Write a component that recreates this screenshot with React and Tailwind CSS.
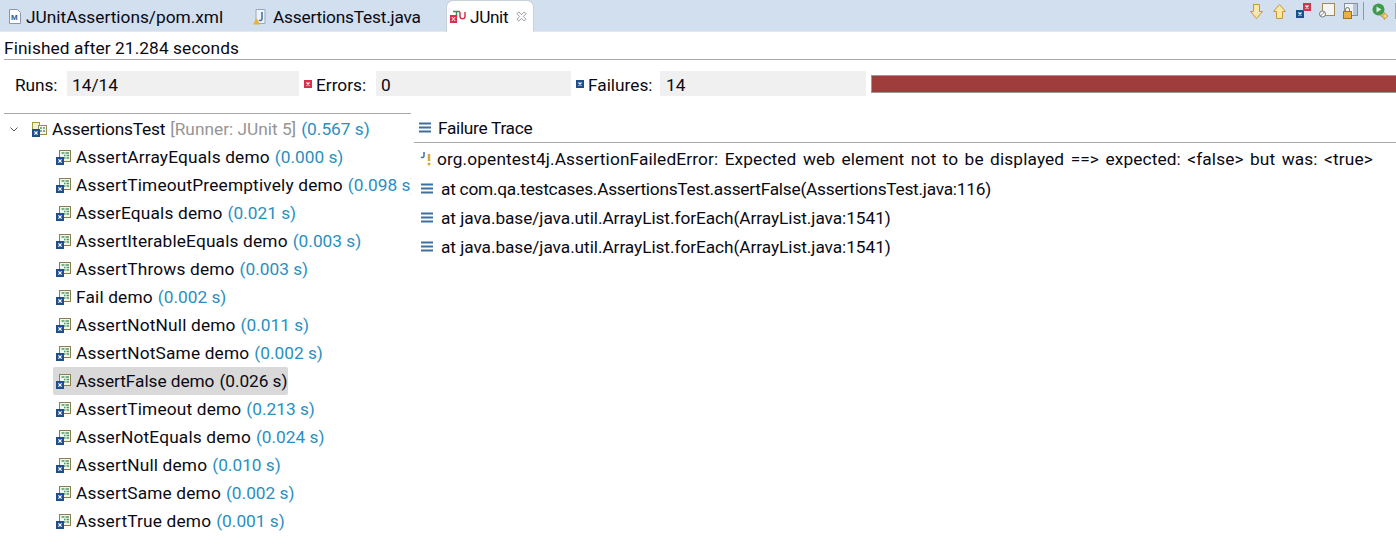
import React from "react";

const tests = [
  ["AssertArrayEquals demo", "(0.000 s)"],
  ["AssertTimeoutPreemptively demo", "(0.098 s)"],
  ["AsserEquals demo", "(0.021 s)"],
  ["AssertIterableEquals demo", "(0.003 s)"],
  ["AssertThrows demo", "(0.003 s)"],
  ["Fail demo", "(0.002 s)"],
  ["AssertNotNull demo", "(0.011 s)"],
  ["AssertNotSame demo", "(0.002 s)"],
  ["AssertFalse demo", "(0.026 s)", true],
  ["AssertTimeout demo", "(0.213 s)"],
  ["AsserNotEquals demo", "(0.024 s)"],
  ["AssertNull demo", "(0.010 s)"],
  ["AssertSame demo", "(0.002 s)"],
  ["AssertTrue demo", "(0.001 s)"],
];

const trace = [
  ["at com.qa.testcases.AssertionsTest.assertFalse(AssertionsTest.java:116)", "tracking-[-0.25px]"],
  ["at java.base/java.util.ArrayList.forEach(ArrayList.java:1541)", "tracking-[-0.07px]"],
  ["at java.base/java.util.ArrayList.forEach(ArrayList.java:1541)", "tracking-[-0.07px]"],
];

// small red or blue "x" square used by the counters and the tree
const XBox = ({ color = "#1f4e8c", size = 8 }) => (
  <svg width={size} height={size} viewBox="0 0 8 8" className="shrink-0 block">
    <rect width="8" height="8" fill={color} />
    <path d="M2.5 2.5l3 3M5.5 2.5l-3 3" stroke="#fff" strokeWidth="1.2" />
  </svg>
);

const TestIcon = () => (
  <svg width="15" height="15" viewBox="0 0 15 15" className="shrink-0">
    <rect x="3.500" y="0.500" width="11" height="11" fill="#f4f6ee" stroke="#8c7f4c" />
    <path d="M5.500 3h3M9.500 3h3.500M8 5.500h1.500M10.500 5.500h2.500M8 8h1.500M10.500 8h2.500" stroke="#4f9a6c" strokeWidth="1.300" />
    <rect x="0" y="7" width="8" height="8" fill="#1f4e8c" />
    <path d="M2.400 9.400l3.200 3.200M5.600 9.400l-3.200 3.200" stroke="#fff" strokeWidth="1.200" />
  </svg>
);

const SuiteIcon = () => (
  <svg width="15" height="15" viewBox="0 0 15 15" className="shrink-0">
    <rect x="0.500" y="0.500" width="7" height="7" fill="#eef2dc" stroke="#a39a3c" />
    <rect x="6.500" y="3.500" width="8" height="9" fill="#f4f6ee" stroke="#a0894c" />
    <path d="M8 6h2M11 6h2M8 9h2M11 9h2" stroke="#4f9a6c" strokeWidth="1.300" />
    <rect x="0" y="7" width="8" height="8" fill="#1f4e8c" />
    <path d="M2.400 9.400l3.200 3.200M5.600 9.400l-3.200 3.200" stroke="#fff" strokeWidth="1.200" />
  </svg>
);

const StackIcon = () => (
  <svg width="12" height="11" viewBox="0 0 12 11" className="shrink-0">
    <path d="M0 1.500h12M0 5.500h12M0 9.500h12" stroke="#3f6f9f" strokeWidth="2" />
  </svg>
);

const Toolbar = () => (
  <div className="flex items-start w-[146px] overflow-hidden">
    <svg width="13" height="15" viewBox="0 0 13 15" className="mt-[4px] mr-[10px] shrink-0">
      <path d="M3.500.5h6v7h3l-6 7-6-7h3z" fill="#fbe7a4" stroke="#c8963a" />
    </svg>
    <svg width="13" height="15" viewBox="0 0 13 15" className="mt-[4px] mr-[10px] shrink-0">
      <path d="M3.500 14.500h6v-7h3l-6-7-6 7h3z" fill="#fbe7a4" stroke="#c8963a" />
    </svg>
    <div className="relative w-[15px] h-[15px] mt-[3px] mr-[8px] shrink-0">
      <span className="absolute left-0 bottom-0"><XBox /></span>
      <span className="absolute right-0 top-0"><XBox color="#d9304f" /></span>
    </div>
    <svg width="16" height="15" viewBox="0 0 16 15" className="mt-[3px] mr-[8px] shrink-0">
      <rect x="3.500" y="0.500" width="12" height="12" fill="#f4f4f4" stroke="#a08a5a" />
      <circle cx="3.500" cy="11" r="3" fill="#fff" stroke="#777" />
      <path d="M1.500 13l4-4" stroke="#777" />
    </svg>
    <svg width="15" height="16" viewBox="0 0 15 16" className="mt-[3px] mr-[5px] shrink-0">
      <rect x="1.500" y="0.500" width="13" height="12" fill="#eef2f6" stroke="#8a9099" />
      <rect x="10" y="1" width="4" height="11" fill="#b6c8da" />
      <path d="M2.500 9V6.500a2 2 0 0 1 4 0V9" fill="none" stroke="#777" />
      <rect x="0.500" y="8.500" width="8" height="7" fill="#e8b23c" stroke="#a8701c" />
    </svg>
    <div className="w-px h-[18px] mt-[2px] bg-[#8f979f] mr-[8px] shrink-0" />
    <svg width="17" height="17" viewBox="0 0 17 17" className="mt-[3px] mr-[6px] shrink-0">
      <circle cx="6.500" cy="6.500" r="6" fill="#3f9b4b" />
      <path d="M4.500 3.500l5 3-5 3z" fill="#cfeedd" />
      <path d="M8 12h4v-2.500l4 3.500-4 3.500v-2.500h-2z" fill="#f5dc8c" stroke="#c8963a" />
    </svg>
    <div className="w-[2px] h-[16px] mt-[3px] bg-[#a4a9ad] shrink-0" />
  </div>
);

export default function App() {
  return (
    <div
      className="w-[1396px] h-[558px] bg-white text-[17.3px] leading-[24px] text-[#0a0a14] overflow-hidden flex flex-col"
      style={{ fontFamily: "Roboto, sans-serif" }}
    >
      {/* editor tabs */}
      <div className="h-[32px] shrink-0 bg-[#d1dfee] flex justify-between border-b border-[#e4e9ef]">
        <div className="flex items-end h-[32px]">
          <div className="flex items-center h-[31px] pl-[9px] w-[246px] gap-[5px]">
            <svg width="12" height="15" viewBox="0 0 12 15" className="shrink-0">
              <path d="M.5.500h8l3 3v11H.5z" fill="#fff" stroke="#8a97a8" />
              <text x="2" y="11" fontSize="8" fontWeight="700" fill="#2c5c9c" fontFamily="Liberation Sans">M</text>
            </svg>
            <span>JUnitAssertions/pom.xml</span>
          </div>
          <div className="flex items-center h-[31px] w-[200px] pl-[7px] gap-[5px]">
            <svg width="15" height="16" viewBox="0 0 15 16" className="shrink-0">
              <path d="M3 .500h9v14H3z" fill="#eef3fa" stroke="#9aa8bb" />
              <path d="M9 3v7c0 1.500-2 2-3 1" stroke="#3f6f9f" strokeWidth="1.500" fill="none" />
              <path d="M3.500 9l3.500 6.500H0z" fill="#e8b23c" />
            </svg>
            <span className="tracking-[-0.2px]">AssertionsTest.java</span>
          </div>
          <div className="flex items-center h-[32px] w-[88px] pl-[3px] gap-[2px] bg-white rounded-t-[7px] border border-b-0 border-[#c8d0d9]">
            <svg width="18" height="16" viewBox="0 0 18 16" className="shrink-0">
              <path d="M3 2.500h7M6.500 2.500V8" stroke="#3f8f5f" strokeWidth="1.500" />
              <rect x="0" y="6" width="7" height="8" fill="#d9304f" />
              <path d="M1.800 8l3.400 4M5.200 8l-3.400 4" stroke="#fff" />
              <path d="M10 3v4.500c0 3 5 3 5 0V3" stroke="#d9304f" strokeWidth="1.500" fill="none" />
            </svg>
            <span className="tracking-[-0.4px]">JUnit</span>
            <svg width="11" height="11" viewBox="0 0 12 12" className="ml-[6px] shrink-0">
              <path d="M1 3l2-2 3 3 3-3 2 2-3 3 3 3-2 2-3-3-3 3-2-2 3-3z" fill="#fff" stroke="#8d949b" />
            </svg>
          </div>
        </div>
        <Toolbar />
      </div>

      {/* status line */}
      <div className="h-[28px] shrink-0 ml-[4px] pt-[5px] flex items-center border-b border-[#a9a9a9] tracking-[0.1px]">
        Finished after 21.284 seconds
      </div>

      {/* counters */}
      <div className="h-[25px] mt-[11px] shrink-0 flex items-center">
        <span className="pl-[15px] w-[67px] pt-[2px] tracking-[-0.1px]">Runs:</span>
        <div className="w-[232px] h-[25px] bg-[#f0f0f0] pl-[5px] pt-[2px]">14/14</div>
        <span className="ml-[5px] mr-[4px]"><XBox color="#d9304f" /></span>
        <span className="w-[60px] pt-[2px]">Errors:</span>
        <div className="w-[195px] h-[25px] bg-[#f0f0f0] pl-[5px] pt-[2px]">0</div>
        <span className="ml-[5px] mr-[4px]"><XBox /></span>
        <span className="w-[72px] pt-[2px]">Failures:</span>
        <div className="w-[206px] h-[25px] bg-[#f0f0f0] pl-[6px] pt-[2px]">14</div>
        <div className="flex-1 h-[18px] ml-[5px] bg-[#9f3d3d] border-l border-t border-b border-[#9a9a9a]" />
      </div>

      {/* split: test tree and failure trace */}
      <div className="flex flex-1 mt-[17px] min-h-0">
        <div className="w-[407px] shrink-0 ml-[4px] border-t border-[#a9a9a9] overflow-hidden">
          <div className="h-[28px] mt-[1px] flex items-center whitespace-nowrap">
            <svg width="8" height="5" viewBox="0 0 8 5" className="ml-[6px] mr-[14px] shrink-0">
              <path d="M.5.500L4 4 7.500.500" stroke="#555" fill="none" />
            </svg>
            <SuiteIcon />
            <span className="ml-[5px] tracking-[-0.2px]">AssertionsTest</span>
            <span className="ml-[5px] text-[#959595]">[Runner: JUnit 5]</span>
            <span className="ml-[5px] text-[#2a8fc0]">(0.567 s)</span>
          </div>
          {tests.map(([name, time, selected]) => (
            <div key={name} className="h-[28px] flex items-center pl-[49px] whitespace-nowrap">
              <div className={`flex items-center h-[28px] pl-[3px] pr-[1px] rounded-[2px] ${selected ? "bg-[#d9d9d9] tracking-[-0.06px]" : ""}`}>
                <TestIcon />
                <span className={`ml-[5px] ${selected ? "" : "tracking-[0.17px]"}`}>{name}</span>
                <span className={`ml-[5px] ${selected ? "" : "text-[#2a8fc0]"}`}>{time}</span>
              </div>
            </div>
          ))}
        </div>

        <div className="flex-1 min-w-0 ml-[3px]">
          <div className="h-[30px] flex items-center pl-[5px] border-b border-[#a9a9a9]">
            <StackIcon />
            <span className="ml-[7px] tracking-[-0.3px]">Failure Trace</span>
          </div>
          <div className="h-[31px] flex items-center ml-[6px] whitespace-nowrap">
            <svg width="12" height="15" viewBox="0 0 12 15" className="shrink-0">
              <path d="M4 1v4c0 1.500-2 2-3 1" stroke="#3f6f9f" strokeWidth="1.500" fill="none" />
              <path d="M9 3v7" stroke="#d9a53c" strokeWidth="2.500" />
              <circle cx="9" cy="13" r="1.500" fill="#d9a53c" />
            </svg>
            <span className="ml-[5px] tracking-[0.12px] [word-spacing:2px]">org.opentest4j.AssertionFailedError: Expected web element not to be displayed ==&gt; expected: &lt;false&gt; but was: &lt;true&gt;</span>
          </div>
          {trace.map(([line, spacing], i) => (
            <div key={i} className="h-[29px] flex items-center ml-[7px] whitespace-nowrap">
              <StackIcon />
              <span className={`ml-[8px] ${spacing}`}>{line}</span>
            </div>
          ))}
        </div>
      </div>
    </div>
  );
}
